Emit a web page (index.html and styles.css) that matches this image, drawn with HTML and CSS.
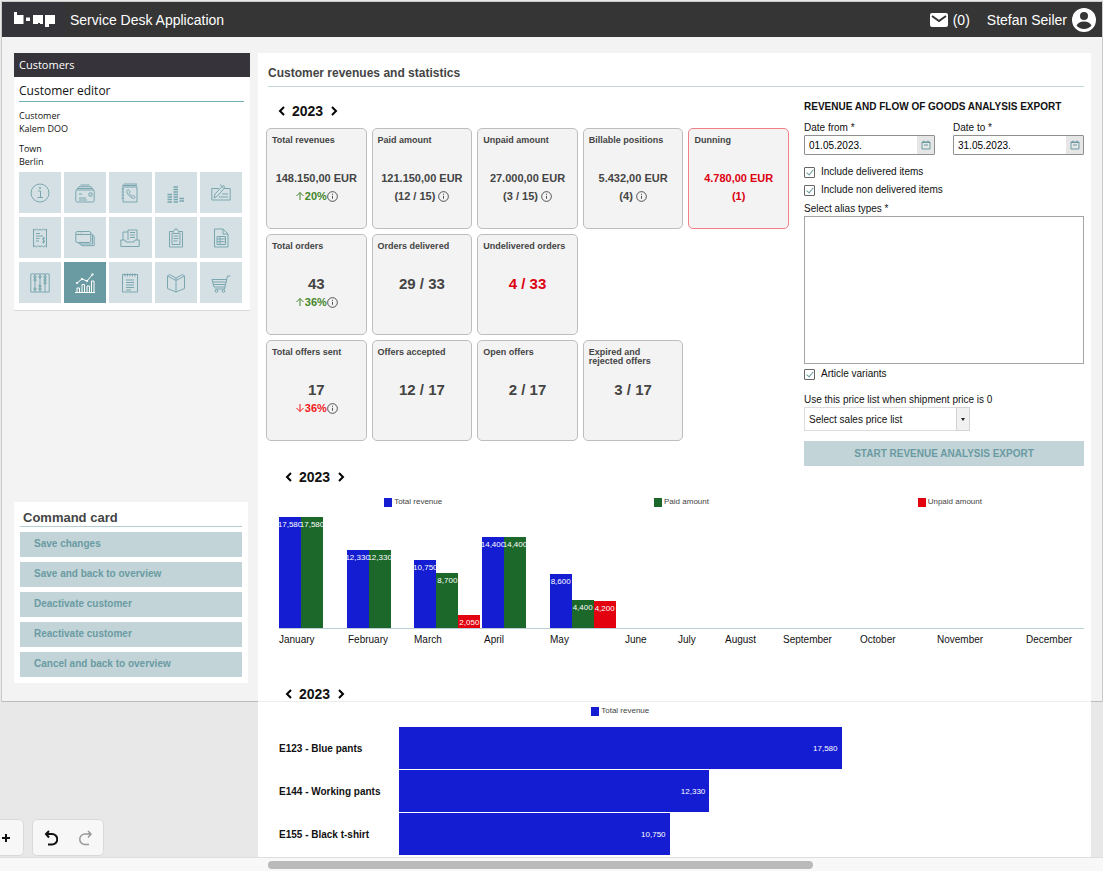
FILE: index.html
```html
<!DOCTYPE html>
<html lang="en">
<head>
    <meta charset="UTF-8">
    <meta name="viewport" content="width=device-width, initial-scale=1.0">
    <title>Service Desk Application</title>
    <link rel="stylesheet" href="styles.css">
</head>
<body>
    <svg class="defs" aria-hidden="true">
        <symbol id="info" viewBox="0 0 12 12"><circle cx="6" cy="6" r="5.300"/><path d="M6 5.300v3.200M6 3v1.200"/></symbol>
        <symbol id="prev" viewBox="0 0 10 10"><path d="M7 1 3 5l4 4"/></symbol>
        <symbol id="next" viewBox="0 0 10 10"><path d="m3 1 4 4-4 4"/></symbol>
        <symbol id="up" viewBox="0 0 10 10"><path d="M5 9V1.500M1.500 5 5 1.500 8.500 5"/></symbol>
        <symbol id="down" viewBox="0 0 10 10"><path d="M5 1v7.500M1.500 5 5 8.500 8.500 5"/></symbol>
        <symbol id="calendar" viewBox="0 0 10 10"><path d="M1 2h8v7H1zM1 2.500h8M3 .5V2M7 .5V2M3 5h4"/></symbol>
    </svg>

    <div class="canvas">
        <div class="frame">
            <header class="topbar">
                <div class="logo">
                    <svg width="42" height="16" viewBox="0 0 42 16"><path fill="#fff" d="M0 0h3v3h6.500v9H0zM12 5.500h4v3.500h-4zM19 3h10v9h-3v-1h-2v1h-5zM31 3h10v9h-6v3h-4z"/></svg>
                </div>
                <h1>Service Desk Application</h1>
                <a class="mail" href="#">
                    <svg width="18" height="14" viewBox="0 0 18 14"><rect width="18" height="14" rx="2" fill="#fff"/><path class="flap" d="m2 3 7 5 7-5"/></svg>
                    (0)
                </a>
                <a class="user" href="#">
                    Stefan Seiler
                    <svg width="24" height="24" viewBox="0 0 24 24"><circle cx="12" cy="12" r="12" fill="#fff"/><circle cx="12" cy="8" r="4" fill="#353535"/><path d="M4.500 17.500c1.500-2.500 4-4 7.500-4s6 1.500 7.500 4c-1.800 2.300-4.400 3.500-7.500 3.500s-5.700-1.200-7.500-3.500z" fill="#353535"/></svg>
                </a>
            </header>

            <div class="layout">
                <aside class="sidebar">
                    <section class="customer-card">
                        <div class="card-head">Customers</div>
                        <div class="card-body">
                            <h2>Customer editor</h2>
                            <dl>
                                <dt>Customer</dt>
                                <dd>Kalem DOO</dd>
                                <dt>Town</dt>
                                <dd>Berlin</dd>
                            </dl>
                            <nav class="tiles">
                                <button aria-label="Info"><svg viewBox="0 0 20 20"><circle cx="10" cy="10" r="9"/><path d="M8 8h2.500v6M7.500 14.500h5.500"/><circle cx="10" cy="5" r=".7"/></svg></button>
                                <button aria-label="Mail"><svg viewBox="0 0 20 20"><rect x=".8" y="7" width="18.400" height="12" rx="1.500"/><path d="M2.500 5.500h15M4 3.700h12M5.500 2h9M1 7.500l3-4M19 7.500l-3-4M14 10h3v3h-3zM4 11h3M4 15h7M4 17h8"/></svg></button>
                                <button aria-label="Phone book"><svg viewBox="0 0 20 20"><path d="M3 2.500V19h14V4H4.500a1.500 1.500 0 0 1 0-3H17M4 2.500h13M1.500 6H4M1.500 9H4M1.500 12H4M1.500 15H4"/><path d="M7 7.500c-.8 1 0 3 2 5s4.300 3.500 5.500 2.700c1-.8.600-1.500-.5-2.300-1.300-.8-1.600.4-2.500 0s-2.300-2-2.200-2.700c.1-.8 1-.8.400-2-.7-1.200-1.800-1.700-2.700-.7z"/></svg></button>
                                <button aria-label="Coins"><svg viewBox="0 0 20 20" stroke-width="1.700"><path d="M1.500 11.500H6M1.500 14H6M1.500 16.500H6M1.500 19H6M7.500 4h4.500M7.500 6.500h4.500M7.500 9h4.500M7.500 11.500h4.500M7.500 14h4.500M7.500 16.500h4.500M7.500 19h4.500M13.500 15.500H18M13.500 18H18"/></svg></button>
                                <button aria-label="Sign"><svg viewBox="0 0 20 20"><path d="M8 5.500H.8V17h18.400V5.500H13M3 15 4 11 12 2.500l2 1.800L6.500 13zM11 3.500l2 2M9 1.500 11 3M11 11h6M8 14h9"/></svg></button>
                                <button aria-label="Receipt"><svg viewBox="0 0 20 20"><path d="M3.500 1 5 2.300 6.700 1l1.700 1.300L10 1l1.600 1.300L13.300 1 15 2.300 16.500 1v18L15 17.700 13.300 19l-1.700-1.300L10 19l-1.600-1.300L6.700 19 5 17.700 3.500 19zM6 5.500h4M6 8h7M6 10.500h3.500M6 13h3M15 10h-1.500c-1 0-1.200 1.800 0 2s1.500 2.200.3 2.200H12M13.700 9v6.500"/></svg></button>
                                <button aria-label="Windows"><svg viewBox="0 0 20 20"><rect x=".8" y="3.500" width="15" height="11" rx="1.500"/><path d="M1 6.500h15M16 5.500l1.500 1.200V16H5l-2-1.500M17.500 7l1.700 1.200v9.500H7L5 16M3 5h.5M5 5h.5M7 5h.5"/></svg></button>
                                <button aria-label="Archive"><svg viewBox="0 0 20 20"><path d="M.8 12H5l1 2h8l1-2h4.200v6.500H.8zM3 12V4h5M8 12V2h9v10M10 4.500h5M10 7h5M10 9.500h5"/></svg></button>
                                <button aria-label="Orders"><svg viewBox="0 0 20 20"><path d="M7 3.500H3.500V19h13V3.500H13M7 5.500V3.500l1.500-1 .5-1.500h2l.5 1.500 1.500 1v2zM6 5v11.500h8V5M7.500 8h5M7.500 10.500h5M7.500 13h4"/></svg></button>
                                <button aria-label="Report"><svg viewBox="0 0 20 20"><path d="M3.500 1H12l5 5v13H3.500zM12 1v5h5M6 8.500h8.500v8H6zM6 11h8.500M6 13.700h8.500M9 8.500v8"/></svg></button>
                                <button aria-label="Calculation"><svg viewBox="0 0 20 20"><path d="M.8 1h18.400v18H.8zM5 1v18M10 1v18M15 1v18"/><circle cx="5" cy="4" r="1.200"/><circle cx="5" cy="7" r="1.200"/><circle cx="5" cy="16" r="1.200"/><circle cx="10" cy="4" r="1.200"/><circle cx="10" cy="13" r="1.200"/><circle cx="10" cy="16" r="1.200"/><circle cx="15" cy="4" r="1.200"/><circle cx="15" cy="7" r="1.200"/><circle cx="15" cy="10" r="1.200"/></svg></button>
                                <button class="active" aria-label="Statistics"><svg viewBox="0 0 20 20"><path d="M0 19.500h20M2 19v-4h2.500v4M7 19v-7.500h2.500V19M12 19v-6h2.500v6M16.500 19V8H19v11M2 10l5-4 5 2 5.500-6.500"/><circle cx="2" cy="10" r=".8"/><circle cx="7" cy="6" r=".8"/><circle cx="12" cy="8" r=".8"/><circle cx="17.500" cy="1.500" r=".8"/></svg></button>
                                <button aria-label="Notes"><svg viewBox="0 0 20 20"><path d="M2.500 1.500h15V19h-15zM5 .5v3M7.500.5v3M10 .5v3M12.500.5v3M15 .5v3M6 7h8M6 9.500h8M6 12h8M6 14.500h8M6 17h5"/></svg></button>
                                <button aria-label="Catalogue"><svg viewBox="0 0 20 20"><path d="M10 5v14M10 5 3.500 1.500 1.500 3v12.500L10 19l8.500-3.500V3l-2-1.500zM1.500 3 10 7.500 18.500 3"/></svg></button>
                                <button aria-label="Cart"><svg viewBox="0 0 20 20"><path d="M19.500 3h-3L13.500 16H4M1 6.500h14.500M1.500 9H15M2 11.500h12.500M3 14h11M1 6.500 3 14"/><circle cx="5.500" cy="18" r="1.300"/><circle cx="12.500" cy="18" r="1.300"/></svg></button>
                            </nav>
                        </div>
                    </section>

                    <section class="command-card">
                        <h2>Command card</h2>
                        <button>Save changes</button>
                        <button>Save and back to overview</button>
                        <button>Deactivate customer</button>
                        <button>Reactivate customer</button>
                        <button>Cancel and back to overview</button>
                    </section>
                </aside>

                <main class="content">
                    <div class="panel">
                        <h2 class="panel-title">Customer revenues and statistics</h2>

                        <div class="overview">
                            <section class="stats">
                                <div class="year">
                                    <button aria-label="Previous year"><svg><use href="#prev"/></svg></button>
                                    <span>2023</span>
                                    <button aria-label="Next year"><svg><use href="#next"/></svg></button>
                                </div>
                                <div class="cards">
                                    <article class="first">
                                        <h3>Total revenues</h3>
                                        <p class="value">148.150,00 EUR</p>
                                        <p class="trend good"><svg><use href="#up"/></svg>20%<svg class="info"><use href="#info"/></svg></p>
                                    </article>
                                    <article>
                                        <h3>Paid amount</h3>
                                        <p class="value">121.150,00 EUR</p>
                                        <p class="sub">(12 / 15) <svg class="info"><use href="#info"/></svg></p>
                                    </article>
                                    <article>
                                        <h3>Unpaid amount</h3>
                                        <p class="value">27.000,00 EUR</p>
                                        <p class="sub">(3 / 15) <svg class="info"><use href="#info"/></svg></p>
                                    </article>
                                    <article>
                                        <h3>Billable positions</h3>
                                        <p class="value">5.432,00 EUR</p>
                                        <p class="sub">(4) <svg class="info"><use href="#info"/></svg></p>
                                    </article>
                                    <article class="dunning">
                                        <h3>Dunning</h3>
                                        <p class="value">4.780,00 EUR</p>
                                        <p class="sub">(1)</p>
                                    </article>

                                    <article class="first">
                                        <h3>Total orders</h3>
                                        <p class="count">43</p>
                                        <p class="trend good"><svg><use href="#up"/></svg>36%<svg class="info"><use href="#info"/></svg></p>
                                    </article>
                                    <article>
                                        <h3>Orders delivered</h3>
                                        <p class="count">29 / 33</p>
                                    </article>
                                    <article>
                                        <h3>Undelivered orders</h3>
                                        <p class="count alert">4 / 33</p>
                                    </article>

                                    <article class="first">
                                        <h3>Total offers sent</h3>
                                        <p class="count">17</p>
                                        <p class="trend bad"><svg><use href="#down"/></svg>36%<svg class="info"><use href="#info"/></svg></p>
                                    </article>
                                    <article>
                                        <h3>Offers accepted</h3>
                                        <p class="count">12 / 17</p>
                                    </article>
                                    <article>
                                        <h3>Open offers</h3>
                                        <p class="count">2 / 17</p>
                                    </article>
                                    <article>
                                        <h3>Expired and<br>rejected offers</h3>
                                        <p class="count">3 / 17</p>
                                    </article>
                                </div>
                            </section>

                            <form class="export">
                                <h3>REVENUE AND FLOW OF GOODS ANALYSIS EXPORT</h3>
                                <div class="dates">
                                    <div>
                                        <label for="date-from">Date from *</label>
                                        <div class="date">
                                            <input type="text" id="date-from" value="01.05.2023.">
                                            <button type="button" aria-label="Pick date from"><svg><use href="#calendar"/></svg></button>
                                        </div>
                                    </div>
                                    <div>
                                        <label for="date-to">Date to *</label>
                                        <div class="date">
                                            <input type="text" id="date-to" value="31.05.2023.">
                                            <button type="button" aria-label="Pick date to"><svg><use href="#calendar"/></svg></button>
                                        </div>
                                    </div>
                                </div>
                                <label class="check"><input type="checkbox" checked>Include delivered items</label>
                                <label class="check"><input type="checkbox" checked>Include non delivered items</label>
                                <label for="alias">Select alias types *</label>
                                <select id="alias" class="alias" multiple></select>
                                <label class="check"><input type="checkbox" checked>Article variants</label>
                                <label class="price-label" for="price-list">Use this price list when shipment price is 0</label>
                                <div class="price-list">
                                    <select id="price-list"><option>Select sales price list</option></select>
                                    <span class="arrow"></span>
                                </div>
                                <button type="submit" class="start">START REVENUE ANALYSIS EXPORT</button>
                            </form>
                        </div>

                        <section class="chart">
                            <div class="year">
                                <button aria-label="Previous year"><svg><use href="#prev"/></svg></button>
                                <span>2023</span>
                                <button aria-label="Next year"><svg><use href="#next"/></svg></button>
                            </div>
                            <div class="legend">
                                <span><i class="blue"></i>Total revenue</span>
                                <span><i class="green"></i>Paid amount</span>
                                <span><i class="red"></i>Unpaid amount</span>
                            </div>
                            <div class="plot">
                                <div class="columns">
                                    <div class="month">
                                        <b class="blue" style="height: 100%">17,580</b>
                                        <b class="green" style="height: 100%">17,580</b>
                                    </div>
                                    <div class="month">
                                        <b class="blue" style="height: 70%">12,330</b>
                                        <b class="green" style="height: 70%">12,330</b>
                                    </div>
                                    <div class="month">
                                        <b class="blue" style="height: 61%">10,750</b>
                                        <b class="green" style="height: 49.5%">8,700</b>
                                        <b class="red" style="height: 11.7%">2,050</b>
                                    </div>
                                    <div class="month">
                                        <b class="blue" style="height: 82%">14,400</b>
                                        <b class="green" style="height: 82%">14,400</b>
                                    </div>
                                    <div class="month">
                                        <b class="blue" style="height: 49%">8,600</b>
                                        <b class="green" style="height: 25%">4,400</b>
                                        <b class="red" style="height: 24%">4,200</b>
                                    </div>
                                </div>
                            </div>
                            <div class="months">
                                <span>January</span>
                                <span>February</span>
                                <span>March</span>
                                <span>April</span>
                                <span>May</span>
                                <span>June</span>
                                <span>July</span>
                                <span>August</span>
                                <span>September</span>
                                <span>October</span>
                                <span>November</span>
                                <span>December</span>
                            </div>
                        </section>

                        <section class="chart articles">
                            <div class="year">
                                <button aria-label="Previous year"><svg><use href="#prev"/></svg></button>
                                <span>2023</span>
                                <button aria-label="Next year"><svg><use href="#next"/></svg></button>
                            </div>
                            <div class="article-row">
                                <span></span>
                                <div class="legend" style="width: 64.6%">
                                    <span><i class="blue"></i>Total revenue</span>
                                </div>
                            </div>
                            <div class="bars">
                                <div class="article-row">
                                    <span>E123 - Blue pants</span>
                                    <div><b class="blue" style="width: 64.6%">17,580</b></div>
                                </div>
                                <div class="article-row">
                                    <span>E144 - Working pants</span>
                                    <div><b class="blue" style="width: 45.3%">12,330</b></div>
                                </div>
                                <div class="article-row">
                                    <span>E155 - Black t-shirt</span>
                                    <div><b class="blue" style="width: 39.5%">10,750</b></div>
                                </div>
                            </div>
                        </section>
                    </div>
                </main>
            </div>
        </div>

        <div class="tools">
            <div class="tool-group"><button aria-label="Zoom in"><svg width="10" height="10" viewBox="0 0 10 10" stroke-width="2"><path d="M5 1v8M1 5h8"/></svg></button></div>
            <div class="tool-group">
                <button aria-label="Undo"><svg width="14" height="16" viewBox="0 0 14 16" stroke-width="2"><path d="M5 1 2 4l3 3.500M2 4h6a4.800 4.800 0 0 1 0 10.500H4"/></svg></button>
                <button aria-label="Redo" disabled><svg width="14" height="16" viewBox="0 0 14 16" stroke-width="1.500"><path d="m9 1 3 3-3 3.500M12 4H6a4.800 4.800 0 0 0 0 10.500h4"/></svg></button>
            </div>
        </div>
    </div>

    <div class="scrollbar"><div class="thumb"></div></div>
</body>
</html>
```
FILE: styles.css
```css
* { box-sizing: border-box; }
html, body {
    height: 100%;
    margin: 0;
}
body {
    display: flex;
    flex-direction: column;
    overflow: hidden;
    background-color: #e8e8e8;
    color: #111;
    font-family: "Liberation Sans", Arial, sans-serif;
    font-size: 10px;
}
h1, h2, h3, p, dl, dd { margin: 0; }
button, input, select { font-family: inherit; }
button {
    padding: 0;
    border: none;
    background: none;
    cursor: pointer;
}
svg {
    fill: none;
    stroke: currentColor;
    flex: none;
}
.defs { position: absolute; width: 0; height: 0; }
.blue { background-color: #151dd3; }
.green { background-color: #1c672a; }
.red { background-color: #e3000f; }

.canvas {
    position: relative;
    flex: 1;
    min-height: 0;
    overflow: hidden;
}
.frame {
    position: relative;
    margin: 1px 0 0 1px;
    border: 1px solid #cbcbcb;
    background-color: #f3f3f3;
}
/* frame edge stays visible across the panel */
.frame::after {
    content: "";
    position: absolute;
    left: 0;
    right: 0;
    bottom: -1px;
    height: 1px;
    background-color: rgba(0, 0, 0, 0.07);
}

/* top bar */
.topbar {
    display: flex;
    align-items: center;
    height: 35px;
    padding-right: 6px;
    background-color: #353535;
    color: #fff;
    font-size: 14px;
}
.topbar svg { stroke: none; }
.topbar .flap {
    stroke: #353535;
    stroke-width: 2;
}
.topbar a {
    display: flex;
    align-items: center;
    gap: 5px;
    color: #fff;
    text-decoration: none;
}
.topbar h1 {
    flex: 1;
    font-size: 14px;
    font-weight: normal;
}
.logo {
    align-self: stretch;
    display: flex;
    align-items: center;
    padding: 0 9px 0 12px;
    margin-right: 5px;
    background-color: #36343b;
}
.topbar .mail { margin-right: 17px; }

.layout {
    display: grid;
    grid-template-columns: 236px minmax(0, 1fr);
    gap: 8px;
    align-items: start;
    padding: 16px 11px 18px 12px;
}

/* sidebar */
.customer-card {
    margin-bottom: 191px;
    border-bottom: 1px solid #dadada;
    background-color: #fff;
    font-family: "Open Sans", sans-serif;
}
.card-head {
    padding-left: 5px;
    background-color: #36333a;
    color: #fff;
    font-size: 11px;
    line-height: 24px;
}
.card-body { padding: 4px 6px 7px 5px; }
.card-body h2 {
    border-bottom: 1px solid #6fb0b6;
    font-size: 12px;
    font-weight: normal;
    line-height: 20px;
}
.card-body dl {
    padding-top: 7px;
    font-size: 9px;
    line-height: 13px;
}
.card-body dd { margin-bottom: 7px; }
.tiles {
    display: grid;
    grid-template-columns: repeat(5, 1fr);
    gap: 4px 3px;
    margin: -3px 2px 0 0;
}
.tiles button {
    display: flex;
    align-items: center;
    justify-content: center;
    height: 41px;
    background-color: #d5e0e4;
    color: #7aa7af;
}
.tiles .active {
    background-color: #6a9ba2;
    color: #fff;
}
.tiles svg {
    width: 20px;
    height: 20px;
}

.command-card {
    display: flex;
    flex-direction: column;
    gap: 5px;
    margin-right: 2px;
    padding: 7px 6px 6px;
    background-color: #fff;
}
.command-card h2 {
    padding-left: 3px;
    border-bottom: 1px solid #b5ced4;
    color: #444;
    font-size: 13px;
    line-height: 17px;
}
.command-card button, .start {
    height: 25px;
    background-color: #c2d4d8;
    color: #6a9ba2;
    font-weight: bold;
}
.command-card button {
    padding: 0 0 2px 14px;
    font-size: 10px;
    text-align: left;
}

/* panel runs on below the frame */
.content { height: 0; }
.panel {
    padding: 12px 7px 40px 8px;
    background-color: #fff;
}
.panel-title {
    margin-left: 2px;
    padding-bottom: 5px;
    border-bottom: 1px solid #c2d6dc;
    color: #444;
    font-size: 12px;
    line-height: 16px;
}
.overview {
    display: grid;
    grid-template-columns: minmax(0, 1fr) 280px;
    gap: 15px;
}
.year {
    display: flex;
    align-items: center;
    font-size: 14px;
    font-weight: bold;
    line-height: 20px;
}
.year button { display: flex; }
.year span { padding: 0 6px 0 5px; }
.year svg {
    width: 10px;
    height: 10px;
    stroke-width: 2;
}
.stats .year { padding: 14px 0 7px 11px; }

.cards {
    display: grid;
    grid-template-columns: repeat(5, 1fr);
    gap: 5px;
}
.cards article {
    height: 101px;
    padding: 7px 5px;
    border: 1px solid #bdbdbd;
    border-radius: 5px;
    background-color: #f3f3f3;
    color: #444;
    font-weight: bold;
    text-align: center;
}
.cards .first { grid-column: 1; }
.cards h3 {
    height: 33px;
    font-size: 9px;
    line-height: 9px;
    text-align: left;
}
.cards p {
    display: flex;
    align-items: center;
    justify-content: center;
    font-size: 11px;
    line-height: 18px;
    white-space: nowrap;
}
.cards .sub { gap: 3px; }
.cards .count { font-size: 15px; }
.cards svg {
    width: 10px;
    height: 10px;
}
.cards .info {
    width: 11px;
    height: 11px;
    color: #444;
}
.cards .good { color: #44862a; }
.cards .bad { color: #f01818; }
.cards .alert, .dunning p { color: #dd0010; }
.cards .dunning { border-color: #ef8087; }

/* export form */
.export {
    display: flex;
    flex-direction: column;
    padding-top: 13px;
    line-height: 12px;
}
.export h3 {
    font-size: 10px;
    line-height: 14px;
}
.dates {
    display: grid;
    grid-template-columns: repeat(2, minmax(0, 1fr));
    gap: 18px;
    padding: 8px 0;
}
.date {
    display: flex;
    height: 20px;
    margin-top: 1px;
    border: 1px solid #8f8f8f;
    border-radius: 1px;
}
.date input {
    flex: 1;
    min-width: 0;
    padding: 0 4px;
    border: none;
    font-size: 10px;
}
.date button {
    display: flex;
    align-items: center;
    justify-content: center;
    width: 17px;
    background-color: #e6e6e6;
    color: #6a9ba2;
}
.date svg {
    width: 10px;
    height: 10px;
}
.check {
    display: flex;
    align-items: center;
    gap: 6px;
    height: 18px;
}
.check input {
    appearance: none;
    display: flex;
    width: 11px;
    height: 11px;
    margin: 0;
    border: 1px solid #666;
    border-radius: 1px;
}
.check input:checked::before {
    content: "";
    width: 3px;
    height: 6px;
    margin: 0 auto;
    border: solid #6a9ba2;
    border-width: 0 1px 1px 0;
    transform: rotate(40deg);
}
.export > label[for="alias"] { padding-top: 4px; }
.alias {
    height: 148px;
    margin: 1px 0;
    border: 1px solid #a5a5a5;
    border-radius: 0;
    background-color: #fff;
}
.price-label { padding: 11px 0 1px; }
.price-list {
    position: relative;
    width: 166px;
}
.price-list select {
    appearance: none;
    width: 100%;
    height: 24px;
    padding: 0 4px;
    border: 1px solid #dcdcdc;
    border-radius: 0;
    background-color: #fff;
    color: #111;
    font-size: 10px;
}
.arrow {
    position: absolute;
    top: 0;
    right: 0;
    bottom: 0;
    display: flex;
    align-items: center;
    justify-content: center;
    width: 14px;
    border: 1px solid #d4d4d4;
    background-color: #f1f1f1;
    pointer-events: none;
}
.arrow::before {
    content: "";
    border: 2px solid transparent;
    border-top: 3px solid #222;
    border-bottom: none;
}
.start {
    margin-top: 10px;
    font-size: 10px;
}

/* charts */
.chart { padding: 1px 0 0 13px; }
.chart .year { padding-left: 5px; }
.legend {
    display: flex;
    color: #444;
    font-size: 8px;
    line-height: 12px;
}
.chart > .legend { padding: 9px 0; }
.legend > span {
    flex: 1;
    display: flex;
    align-items: center;
    justify-content: center;
    gap: 2px;
}
.legend i {
    width: 8px;
    height: 9px;
}
.plot {
    border-bottom: 1px solid #b9d0d6;
}
.columns {
    display: grid;
    grid-template-columns: repeat(12, 1fr);
    height: 111px;
    margin-right: -7px;
}
.month {
    display: flex;
    align-items: flex-end;
}
.month b, .bars b {
    display: flex;
    color: #fff;
    font-size: 8px;
    font-weight: normal;
    overflow: hidden;
}
.month b {
    justify-content: center;
    width: 22px;
    padding-top: 3px;
    line-height: 10px;
}
.months {
    display: grid;
    grid-template-columns: 69fr 66fr 70fr 66fr 75fr 53fr 47fr 58fr 77fr 77fr 89fr 58fr;
    padding-top: 5px;
    line-height: 12px;
}
.articles { padding-top: 38px; }
.article-row {
    display: grid;
    grid-template-columns: 120px minmax(0, 1fr);
    align-items: center;
    font-weight: bold;
}
.article-row .legend {
    padding-top: 1px;
    font-weight: normal;
}
.bars {
    display: flex;
    flex-direction: column;
    gap: 1px;
    padding-top: 10px;
}
.bars b {
    align-items: center;
    justify-content: flex-end;
    height: 42px;
    padding-right: 4px;
}

/* editor controls over the canvas */
.tools {
    position: absolute;
    left: -13px;
    bottom: 1px;
    display: flex;
    gap: 8px;
}
.tool-group {
    display: flex;
    height: 37px;
    border: 1px solid #d9d9d9;
    border-radius: 5px;
    background-color: #f7f7f7;
}
.tool-group button {
    display: flex;
    align-items: center;
    justify-content: center;
    width: 35px;
    color: #111;
}
.tool-group button:disabled { color: #999; }

.scrollbar {
    padding: 3px 0 2px;
    border-top: 1px solid #dedede;
    background-color: #f8f8f8;
}
.thumb {
    width: 49.4%;
    height: 8px;
    margin-left: 24.3%;
    border-radius: 4px;
    background-color: #bababa;
}
```
